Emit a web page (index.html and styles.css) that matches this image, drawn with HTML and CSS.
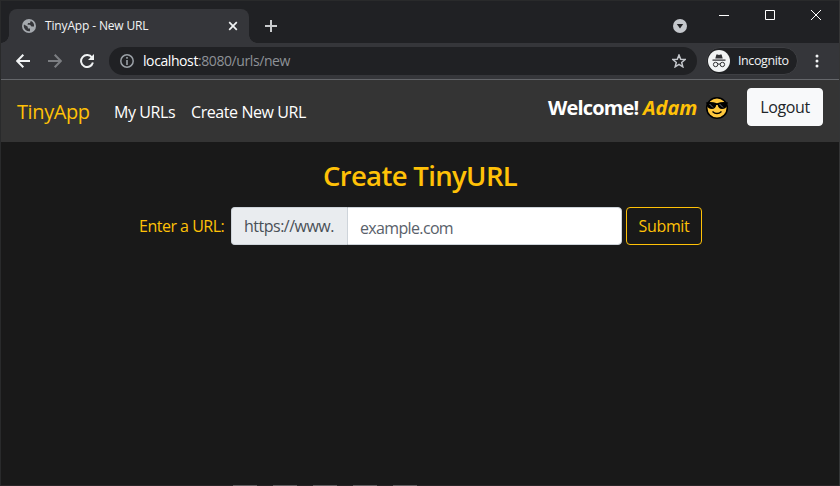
FILE: index.html
```html
<!DOCTYPE html>
<html lang="en">
<head>
<meta charset="utf-8">
<title>TinyApp - New URL</title>
<link rel="stylesheet" href="styles.css">
</head>
<body>
<div class="window">
  <header class="tabstrip">
    <div class="tab">
      <svg class="globe" width="14" height="14" viewBox="0 0 14 14"><circle cx="7" cy="7" r="7" fill="#a5a9ae"/><path d="M2 5.500 5.500 7.500 6 9.500H8V12.200A5.400 5.400 0 0 1 1.700 7ZM7 1.700 8.700 2 8 4H6L5.500 5.700H8L9.500 7.500H12A5.200 5.200 0 0 0 9.500 2.300" fill="#35363a"/></svg>
      <span class="tab-title">TinyApp - New URL</span>
      <svg class="tab-close" width="10" height="10" viewBox="0 0 10 10"><path d="m1.200 1.200 7.600 7.600m0-7.600L1.200 8.800" stroke="#f1f3f4" stroke-width="1.700"/></svg>
    </div>
    <svg class="new-tab" width="12" height="12" viewBox="0 0 12 12"><path d="M6 0v12M0 6h12" stroke="#c9cbcd" stroke-width="2"/></svg>
    <div class="controls">
      <svg class="search-tabs" width="14" height="14" viewBox="0 0 14 14"><circle cx="7" cy="7" r="7" fill="#c4c7cc"/><path d="M3.800 5h6.400L7 9.500Z" fill="#202124"/></svg>
      <svg width="102" height="12" viewBox="0 0 102 12" fill="none" stroke="#fff"><path d="M0 6.500h10M46.500 1.500h9v9h-9ZM92 1l10 10m0-10L92 11"/></svg>
    </div>
  </header>
  <div class="toolbar">
    <svg class="back" width="14" height="14" viewBox="0 0 14 14" fill="none" stroke="#f1f3f4" stroke-width="2"><path d="M14 7H1.500M7.300.8 1.200 7l6.100 6.200"/></svg>
    <svg class="forward" width="14" height="14" viewBox="0 0 14 14" fill="none" stroke="#7c7e82" stroke-width="2"><path d="M0 7h12.500M6.700.8 12.800 7l-6.100 6.200"/></svg>
    <svg class="reload" width="14" height="14" viewBox="0 0 14 14"><path d="M12 3.600A6 6 0 1 0 12.900 8.500" fill="none" stroke="#f1f3f4" stroke-width="2"/><path d="M14 0v6H8Z" fill="#f1f3f4"/></svg>
    <div class="address">
      <svg width="14" height="14" viewBox="0 0 14 14"><circle cx="7" cy="7" r="6.200" fill="none" stroke="#9aa0a6" stroke-width="1.500"/><path d="M7 3v1.700M7 6v5" stroke="#9aa0a6" stroke-width="1.600"/></svg>
      <span class="url"><b>localhost</b>:8080/urls/new</span>
      <svg class="star" width="14" height="14" viewBox="0 0 14 14"><path d="m7 1 1.700 4.200 4.400.3-3.400 2.900 1.100 4.400L7 10.400l-3.800 2.400 1.100-4.400L.9 5.500l4.400-.3Z" fill="none" stroke="#c4c7cc" stroke-width="1.500"/></svg>
    </div>
    <div class="incognito">
      <svg width="22" height="22" viewBox="0 0 22 22"><circle cx="11" cy="11" r="11" fill="#f1f3f4"/><path d="M7.300 8.500 8.400 4.500H9.500L11 5l1.500-.5h1.100l1.100 4ZM4.500 9.500h13v1.200h-13Z" fill="#303134"/><g fill="none" stroke="#303134"><circle cx="7.600" cy="14.500" r="2.200"/><circle cx="14.400" cy="14.500" r="2.200"/><path d="M9.800 14.300q1.200-.8 2.400 0"/></g></svg>
      <span class="incognito-label">Incognito</span>
    </div>
    <svg class="more" width="4" height="14" viewBox="0 0 4 14" fill="#f1f3f4"><circle cx="2" cy="2" r="1.500"/><circle cx="2" cy="7" r="1.500"/><circle cx="2" cy="12" r="1.500"/></svg>
  </div>
  <nav class="navbar">
    <a class="brand">TinyApp</a>
    <a class="link my-urls">My URLs</a>
    <a class="link create">Create New URL</a>
    <div class="welcome"><span class="hello">Welcome!</span><em>Adam</em></div>
    <svg class="emoji" width="24" height="24" viewBox="0 0 24 24"><circle cx="12" cy="12" r="10.300" fill="#ffc83d" stroke="#000" stroke-width="1.600"/><path d="M.8 6.500Q6 5 12 7.200 18 5 23.200 6.500L22 8.500Q21.500 13 17 13 13.500 13 12.700 9h-1.400Q10.500 13 7 13 2.500 13 2 8.500Z" fill="#000"/><path d="m4.500 8 3.500 3.500M14.500 8l3.500 3.500" stroke="#74777b"/><path d="M7.500 15.500q4.500 4.200 9 0" fill="none" stroke="#000" stroke-width="1.400"/></svg>
    <button class="logout"><span>Logout</span></button>
  </nav>
  <main>
    <h1><span>Create TinyURL</span></h1>
    <form class="form">
      <label for="url">Enter a URL:</label>
      <div class="group"><span class="prefix"><span>https://www.</span></span><input id="url" placeholder="example.com"></div>
      <button class="submit" type="button"><span>Submit</span></button>
    </form>
  </main>
  <footer class="edge"><i></i><i></i><i></i><i></i><i></i></footer>
</div>
</body>
</html>
```
FILE: styles.css
```css
* { box-sizing: border-box; }
body { margin: 0; background: #191919; font: 16px/24px "Open Sans", "Noto Sans", sans-serif; overflow: hidden; }
svg { display: block; flex: none; }
span, a, label { white-space: nowrap; }
.window { width: 840px; height: 486px; border-left: 1px solid #292a2b; border-right: 1px solid #343536; display: flex; flex-direction: column; }
.tabstrip { height: 43px; background: #202124; display: flex; padding: 8px 0 0 8px; border-top: 1px solid #292a2b; }
.tab { position: relative; width: 240px; height: 34px; background: #35363a; border-radius: 8px 8px 0 0; display: flex; align-items: center; padding: 0 11px 0 13px; }
.tab::before, .tab::after { content: ""; position: absolute; bottom: 0; width: 8px; height: 8px; }
.tab::before { left: -8px; background: radial-gradient(circle at 0 0, transparent 7.5px, #35363a 8px); }
.tab::after { right: -8px; background: radial-gradient(circle at 100% 0, transparent 7.5px, #35363a 8px); }
.tab-title { margin-left: 9px; font-size: 12px; letter-spacing: -.15px; color: #f1f3f4; }
.tab-close { margin-left: auto; }
.new-tab { margin: 11px 0 0 16px; }
.controls { display: flex; margin-left: auto; padding-right: 18px; }
.search-tabs { margin: 10px 32px 0 0; }
.toolbar { height: 37px; background: #35363a; border-bottom: 1px solid #64666a; display: flex; align-items: center; padding: 0 20px 0 15px; }
.forward { margin-left: 18px; }
.reload { margin-left: 18px; }
.address { width: 588px; height: 28px; margin-left: 15px; border-radius: 14px; background: #202124; display: flex; align-items: center; padding: 0 11px; }
.url { margin-left: 9px; font-size: 14px; color: #8e9297; letter-spacing: -.41px; }
.url b { font-weight: 400; color: #fff; }
.star { margin-left: auto; }
.incognito { width: 92px; height: 28px; margin-left: 9px; border: 1px solid #3e3f43; border-radius: 14px; background: #202124; display: flex; align-items: center; padding-left: 1px; }
.incognito-label { color: #f1f3f4; font-size: 12.5px; margin-left: 8px; letter-spacing: -.4px; }
.more { margin-left: auto; }
.navbar { height: 62px; background: #343434; display: flex; align-items: flex-start; padding: 8px 16px; }
.brand { width: 97px; font-size: 20px; line-height: 30px; margin-top: 9px; color: #ffc107; letter-spacing: -.4px; }
.link { color: #fff; margin-top: 12px; letter-spacing: -.42px; }
.my-urls { width: 77px; }
.welcome { margin-left: auto; color: #fff; font-size: 20px; font-weight: 700; line-height: 24px; display: flex; width: 157px; margin-top: 8px; }
.hello { width: 95px; letter-spacing: -.85px; }
.welcome em { color: #ffc107; }
.emoji { width: 24px; margin-top: 8px; }
button { font: inherit; height: 38px; width: 76px; padding: 0; border-radius: 4px; letter-spacing: -.35px; }
.logout { margin-left: 18px; border: 1px solid #f8f9fa; background: #f8f9fa; color: #212529; }
main { flex: 1; display: flex; flex-direction: column; align-items: center; background: #191919; }
h1 { margin: 17px 0 14px; font-size: 27.5px; line-height: 34px; font-weight: 600; color: #ffc107; letter-spacing: -.65px; }
.form { display: flex; width: 564px; }
label { width: 93px; line-height: 38px; color: #ffc107; padding-left: 1px; letter-spacing: -.5px; }
.group { display: flex; width: 391px; height: 38px; }
.prefix { width: 116px; border: 1px solid #ced4da; border-right: 0; border-radius: 4px 0 0 4px; background: #e9ecef; color: #495057; line-height: 36px; padding-left: 12px; letter-spacing: -.5px; }
input { width: 275px; border: 1px solid #ced4da; border-radius: 0 4px 4px 0; background: #fff; font: inherit; padding: 3px 12px 0; letter-spacing: -.65px; }
input::placeholder { color: #59616a; opacity: 1; }
.submit { margin-left: 4px; border: 1px solid #ffc107; background: transparent; color: #ffc107; }
.edge { height: 1px; display: flex; gap: 16px; padding-left: 232px; background: #292527; }
.edge i { width: 24px; background: #625d60; }
```
